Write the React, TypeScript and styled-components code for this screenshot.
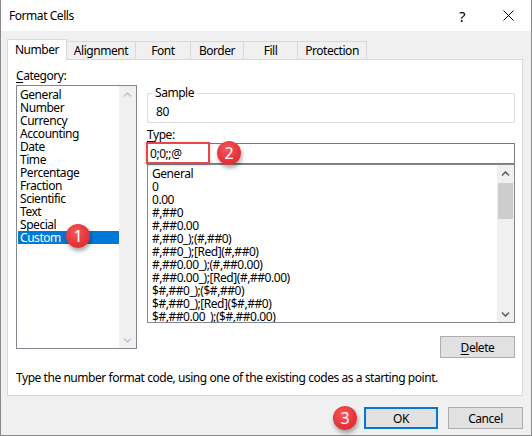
import React from 'react';
import styled, { createGlobalStyle } from 'styled-components';

const GlobalStyle = createGlobalStyle`
  html, body {
    margin: 0;
    padding: 0;
    background: #ffffff;
  }
  body {
    font-family: "Noto Sans", "Liberation Sans", sans-serif;
    font-size: 12px;
    letter-spacing: -0.45px;
    color: #000;
  }
`;

const categories = [
  'General',
  'Number',
  'Currency',
  'Accounting',
  'Date',
  'Time',
  'Percentage',
  'Fraction',
  'Scientific',
  'Text',
  'Special',
  'Custom',
];

const formats = [
  'General',
  '0',
  '0.00',
  '#,##0',
  '#,##0.00',
  '#,##0_);(#,##0)',
  '#,##0_);[Red](#,##0)',
  '#,##0.00_);(#,##0.00)',
  '#,##0.00_);[Red](#,##0.00)',
  '$#,##0_);($#,##0)',
  '$#,##0_);[Red]($#,##0)',
  '$#,##0.00_);($#,##0.00)',
  '$#,##0.00_);[Red]($#,##0.00)',
];

const tabs = [
  { label: 'Number', width: 60 },
  { label: 'Alignment', width: 69 },
  { label: 'Font', width: 55 },
  { label: 'Border', width: 53 },
  { label: 'Fill', width: 54 },
  { label: 'Protection', width: 69 },
];

const Window = styled.div`
  width: 532px;
  height: 436px;
  box-sizing: border-box;
  border: 1px solid #8a8a8a;
  border-top: none;
  background: #f0f0f0;
  display: flex;
  flex-direction: column;
`;

const TitleBar = styled.div`
  height: 31px;
  background: #fff;
  display: flex;
  align-items: center;
  padding-left: 8px;
`;

const Title = styled.span`
  flex: 1;
  font-size: 12px;
`;

const TitleButton = styled.div`
  width: 46px;
  height: 31px;
  display: flex;
  align-items: center;
  justify-content: center;
  font-size: 15px;
`;

const Body = styled.div`
  flex: 1;
  display: flex;
  flex-direction: column;
  padding: 8px 8px 0 6px;
`;

const TabStrip = styled.div`
  display: flex;
  align-items: flex-end;
  height: 20px;
`;

const Tab = styled.div<{ $active?: boolean; $w: number }>`
  position: relative;
  z-index: ${p => (p.$active ? 1 : 0)};
  box-sizing: border-box;
  width: ${p => p.$w}px;
  height: ${p => (p.$active ? 21 : 18)}px;
  margin-bottom: ${p => (p.$active ? -1 : 0)}px;
  background: ${p => (p.$active ? '#fff' : '#f0f0f0')};
  border: 1px solid #d9d9d9;
  border-bottom: none;
  & + & {
    border-left: none;
  }
  display: flex;
  align-items: center;
  justify-content: center;
  padding-bottom: ${p => (p.$active ? 1 : 0)}px;
`;

const Panel = styled.div`
  box-sizing: border-box;
  height: 337px;
  background: #fff;
  border: 1px solid #d9d9d9;
  padding: 8px 7px 0 8px;
  display: flex;
  flex-direction: column;
`;

const PanelGrid = styled.div`
  display: grid;
  grid-template-columns: 121px 368px;
  column-gap: 10px;
`;

const Column = styled.div`
  display: flex;
  flex-direction: column;
`;

const FieldLabel = styled.div<{ $gap?: number }>`
  line-height: 16px;
  height: 16px;
  margin-top: ${p => p.$gap ?? 0}px;
`;

const Key = styled.span`
  text-decoration: underline;
  text-underline-offset: 2px;
`;

const ListBox = styled.div<{ $h: number; $gap?: number }>`
  box-sizing: border-box;
  height: ${p => p.$h}px;
  margin-top: ${p => p.$gap ?? 0}px;
  border: 1px solid #828790;
  display: flex;
  background: #fff;
`;

const Items = styled.div<{ $pad: number }>`
  flex: 1;
  overflow: hidden;
  padding: 2px 0 0 ${p => p.$pad}px;
`;

const Item = styled.div<{ $selected?: boolean }>`
  position: relative;
  height: 13px;
  line-height: 13px;
  padding-left: 2px;
  white-space: nowrap;
  background: ${p => (p.$selected ? '#0078d7' : 'transparent')};
  color: ${p => (p.$selected ? '#fff' : '#000')};
`;

const ScrollBar = styled.div`
  width: 17px;
  background: #f0f0f0;
  display: flex;
  flex-direction: column;
`;

const ArrowBox = styled.div`
  height: 17px;
  display: flex;
  align-items: center;
  justify-content: center;
`;

const Track = styled.div`
  flex: 1;
  padding-top: 1px;
`;

const Thumb = styled.div`
  height: 36px;
  margin: 0 1px;
  background: #cdcdcd;
`;

const SampleBox = styled.fieldset`
  margin: 17px 0 0;
  padding: 3px 8px 2px;
  border: 1px solid #dcdcdc;
  min-width: 0;
  line-height: 16px;
`;

const Legend = styled.legend`
  padding: 0 3px;
  margin-left: -4px;
  line-height: 16px;
`;

const TypeField = styled.div`
  position: relative;
  box-sizing: border-box;
  height: 21px;
  border: 1px solid #7a7a7a;
  padding-left: 2px;
  display: flex;
  align-items: center;
`;

const Highlight = styled.div`
  position: absolute;
  left: -2px;
  top: -2px;
  width: 64px;
  height: 22px;
  box-sizing: border-box;
  border: 2px solid #e8474a;
  box-shadow: 0 1px 3px rgba(0, 0, 0, 0.25);
`;

const Badge = styled.div<{ $x: number; $y: number }>`
  position: absolute;
  left: ${p => p.$x}px;
  top: ${p => p.$y}px;
  z-index: 5;
  width: 24px;
  height: 24px;
  border-radius: 50%;
  background: radial-gradient(circle at 42% 35%, #f45a5d 0%, #e5353a 55%, #d42a2f 100%);
  color: #fff;
  font-size: 16px;
  letter-spacing: 0;
  line-height: 24px;
  text-align: center;
  box-shadow: 1px 3px 4px rgba(0, 0, 0, 0.35);
`;

const ButtonRow = styled.div<{ $gap: number }>`
  display: flex;
  justify-content: flex-end;
  gap: 10px;
  margin-top: ${p => p.$gap}px;
`;

const Button = styled.div<{ $default?: boolean }>`
  position: relative;
  box-sizing: border-box;
  width: ${p => (p.$default ? 74 : 75)}px;
  height: 22px;
  background: #e1e1e1;
  border: ${p => (p.$default ? '2px solid #0078d7' : '1px solid #adadad')};
  display: flex;
  align-items: center;
  justify-content: center;
`;

const Hint = styled.div`
  margin-top: 12px;
  line-height: 16px;
`;

const Chevron = ({ down, color }: { down?: boolean; color: string }) => (
  <svg width="9" height="6" viewBox="0 0 9 6">
    <path
      d={down ? 'M1 1.5 L4.5 5 L8 1.5' : 'M1 4.5 L4.5 1 L8 4.5'}
      fill="none"
      stroke={color}
      strokeWidth="1.6"
    />
  </svg>
);

const CloseIcon = () => (
  <svg width="11" height="11" viewBox="0 0 11 11">
    <path d="M0.5 0.5 L10.5 10.5 M10.5 0.5 L0.5 10.5" stroke="#000" strokeWidth="1" />
  </svg>
);

export default function App() {
  return (
    <>
      <GlobalStyle />
      <Window>
        <TitleBar>
          <Title>Format Cells</Title>
          <TitleButton>?</TitleButton>
          <TitleButton>
            <CloseIcon />
          </TitleButton>
        </TitleBar>
        <Body>
          <TabStrip>
            {tabs.map((t, i) => (
              <Tab key={t.label} $active={i === 0} $w={t.width}>
                {t.label}
              </Tab>
            ))}
          </TabStrip>
          <Panel>
            <PanelGrid>
              <Column>
                <FieldLabel>
                  <Key>C</Key>ategory:
                </FieldLabel>
                <ListBox $h={264} $gap={1}>
                  <Items $pad={1}>
                    {categories.map(c => (
                      <Item key={c} $selected={c === 'Custom'}>
                        {c}
                        {c === 'Custom' && (
                          <Badge $x={48} $y={-7}>
                            1
                          </Badge>
                        )}
                      </Item>
                    ))}
                  </Items>
                  <ScrollBar>
                    <ArrowBox>
                      <Chevron color="#c4c4c4" />
                    </ArrowBox>
                    <Track />
                    <ArrowBox>
                      <Chevron down color="#c4c4c4" />
                    </ArrowBox>
                  </ScrollBar>
                </ListBox>
              </Column>
              <Column>
                <SampleBox>
                  <Legend>Sample</Legend>
                  80
                </SampleBox>
                <FieldLabel $gap={4}>
                  <Key>T</Key>ype:
                </FieldLabel>
                <TypeField>
                  0;0;;@
                  <Highlight />
                  <Badge $x={69} $y={-3}>
                    2
                  </Badge>
                </TypeField>
                <ListBox $h={159}>
                  <Items $pad={2}>
                    {formats.map(f => (
                      <Item key={f}>{f}</Item>
                    ))}
                  </Items>
                  <ScrollBar>
                    <ArrowBox>
                      <Chevron color="#606060" />
                    </ArrowBox>
                    <Track>
                      <Thumb />
                    </Track>
                    <ArrowBox>
                      <Chevron down color="#606060" />
                    </ArrowBox>
                  </ScrollBar>
                </ListBox>
                <ButtonRow $gap={13}>
                  <Button>
                    <Key>D</Key>elete
                  </Button>
                </ButtonRow>
              </Column>
            </PanelGrid>
            <Hint>Type the number format code, using one of the existing codes as a starting point.</Hint>
          </Panel>
          <ButtonRow $gap={11}>
            <Button $default>
              OK
              <Badge $x={-33} $y={-3}>
                3
              </Badge>
            </Button>
            <Button>Cancel</Button>
          </ButtonRow>
        </Body>
      </Window>
    </>
  );
}
